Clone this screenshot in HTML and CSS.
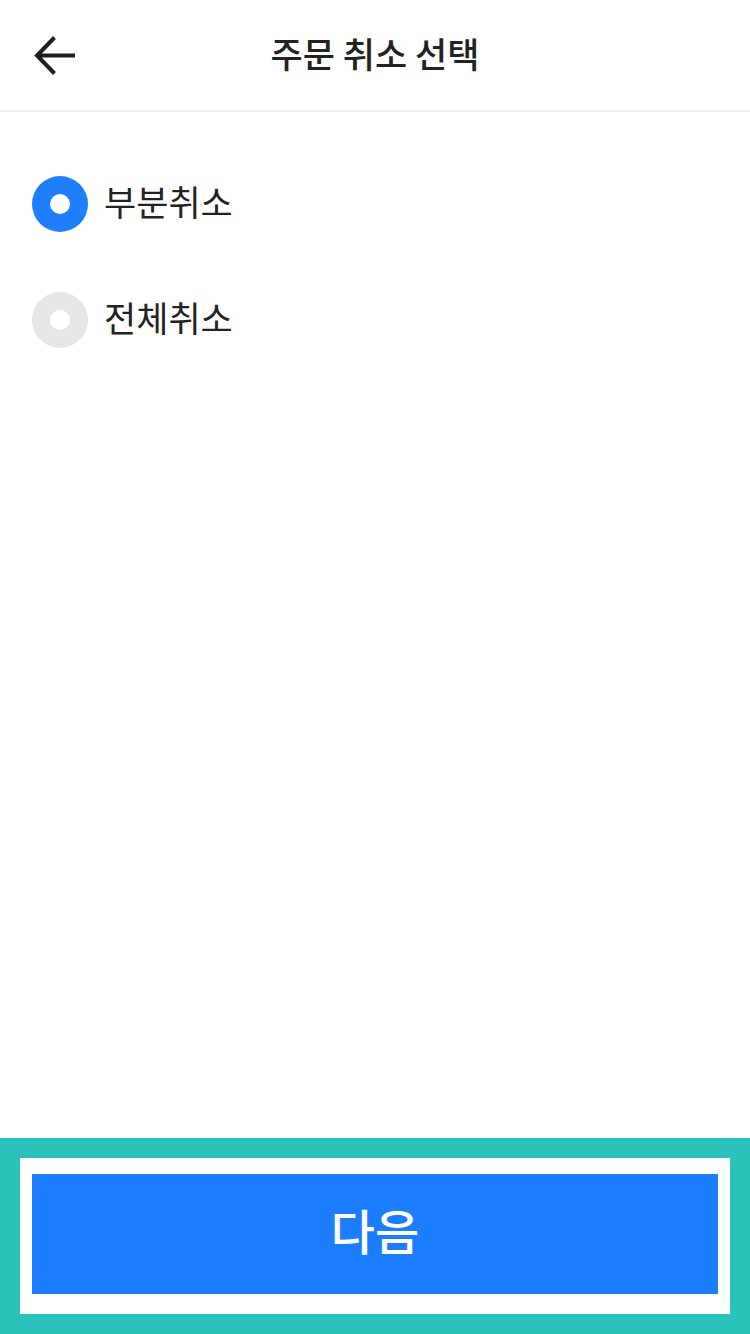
FILE: index.html
```html
<!DOCTYPE html>
<html>
<head>
<meta charset="utf-8">
<title>주문 취소 선택</title>
<link rel="stylesheet" href="styles.css">
</head>
<body>
<div class="page">
    <div class="header">
        <a class="back" href="#">
            <svg width="52" height="52" viewBox="0 0 52 52">
                <path d="M8 25.5H46M25.5 7.5L8 25.5l17.5 18" fill="none" stroke="#1f1f1f" stroke-width="4"/>
            </svg>
        </a>
        <h1 class="title">주문 취소 선택</h1>
    </div>
    <div class="options">
        <label class="option">
            <span class="radio checked"></span>
            <span class="label">부분취소</span>
        </label>
        <label class="option">
            <span class="radio"></span>
            <span class="label">전체취소</span>
        </label>
    </div>
    <div class="footer">
        <div class="footer-inner">
            <button type="button" class="next_button">다음</button>
        </div>
    </div>
</div>
</body>
</html>
```

FILE: styles.css
```css
html, body {
    margin: 0;
    padding: 0;
    background-color: #fff;
    font-family: "Noto Sans CJK KR", "Noto Sans", sans-serif;
    color: #222;
}
.page {
    display: flex;
    flex-direction: column;
    height: 1334px;
}
.header {
    position: relative;
    height: 110px;
    border-bottom: 2px solid #efefef;
    display: flex;
    align-items: center;
    justify-content: center;
}
.back {
    position: absolute;
    left: 29px;
    top: 30px;
    display: block;
    line-height: 0;
}
.title {
    margin: 0 0 6px;
    font-size: 35px;
    font-weight: 500;
    color: #222;
}
.options {
    flex: 1;
    padding: 64px 32px 0;
}
.option {
    display: flex;
    align-items: center;
    height: 56px;
    margin-bottom: 60px;
}
.radio {
    width: 56px;
    height: 56px;
    border-radius: 50%;
    background-color: #e5e6e8;
    display: flex;
    align-items: center;
    justify-content: center;
}
.radio::after {
    content: "";
    width: 20px;
    height: 20px;
    border-radius: 50%;
    background-color: #fff;
}
.radio.checked {
    background-color: #1e7efe;
}
.label {
    margin-left: 16px;
    margin-bottom: 8px;
    font-size: 35px;
    color: #222;
}
.footer {
    background-color: #2bc2bb;
    padding: 20px;
}
.footer-inner {
    background-color: #fff;
    padding: 16px 12px 20px;
}
.next_button {
    display: block;
    width: 100%;
    height: 120px;
    padding: 0 0 10px;
    border: none;
    background-color: #1c7dfe;
    color: #fff;
    font-family: "Noto Sans CJK KR", sans-serif;
    font-size: 48px;
    font-weight: 500;
    cursor: pointer;
}
.next_button:focus {
    outline: none;
}
```
